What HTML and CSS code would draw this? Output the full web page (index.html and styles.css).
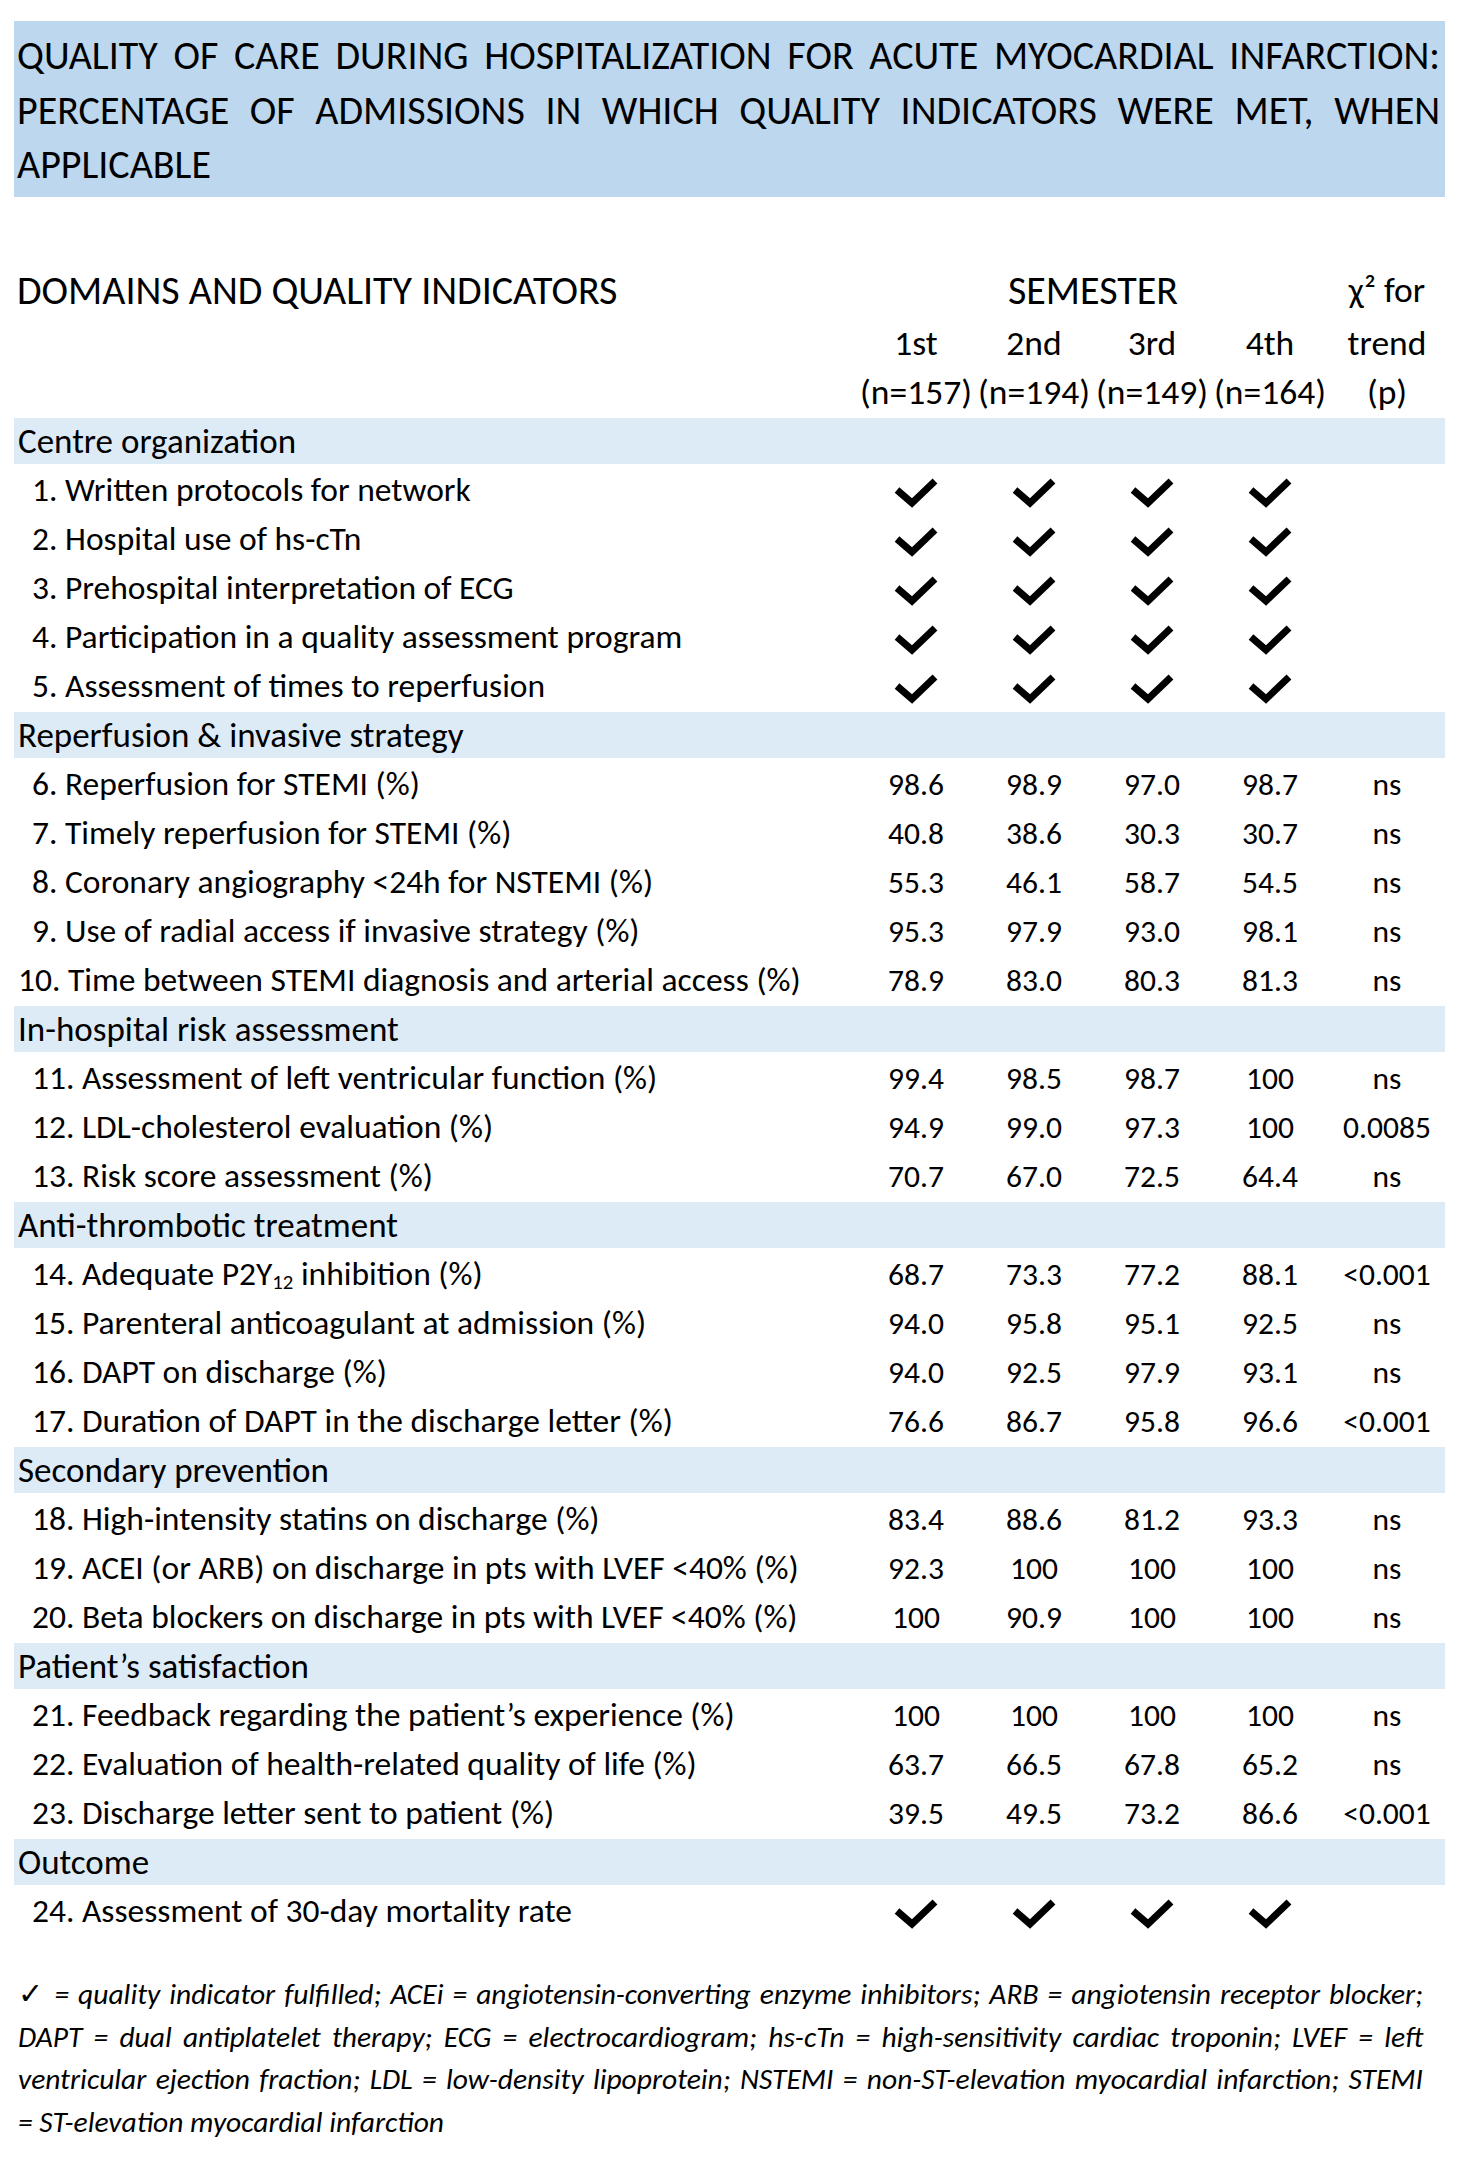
FILE: index.html
```html
<!DOCTYPE html>
<html lang="en">
<head>
<meta charset="utf-8">
<title>Quality of care during hospitalization for acute myocardial infarction</title>
<link rel="stylesheet" href="styles.css">
</head>
<body>
<div class="page">
  <div class="title">
    <span class="jline">QUALITY OF CARE DURING HOSPITALIZATION FOR ACUTE MYOCARDIAL INFARCTION:</span>
    <span class="jline">PERCENTAGE OF ADMISSIONS IN WHICH QUALITY INDICATORS WERE MET, WHEN</span>
    <span class="lline">APPLICABLE</span>
  </div>

  <div class="table">
    <div class="hrow hrow-a">
      <div class="hlabel">DOMAINS AND QUALITY INDICATORS</div>
      <div class="sem">SEMESTER</div>
      <div class="hsub">χ² for</div>
    </div>
    <div class="hrow">
      <div></div>
      <div class="hsub">1st</div><div class="hsub">2nd</div><div class="hsub">3rd</div><div class="hsub">4th</div><div class="hsub">trend</div>
    </div>
    <div class="hrow">
      <div></div>
      <div class="hsub">(n=157)</div><div class="hsub">(n=194)</div><div class="hsub">(n=149)</div><div class="hsub">(n=164)</div><div class="hsub">(p)</div>
    </div>

    <div class="sec">Centre organization</div>
    <div class="row"><div class="lab">1. Written protocols for network</div><div class="c"><svg class="chk" viewBox="0 0 46 36"><polyline points="4,18 19,31 42,9"/></svg></div><div class="c"><svg class="chk" viewBox="0 0 46 36"><polyline points="4,18 19,31 42,9"/></svg></div><div class="c"><svg class="chk" viewBox="0 0 46 36"><polyline points="4,18 19,31 42,9"/></svg></div><div class="c"><svg class="chk" viewBox="0 0 46 36"><polyline points="4,18 19,31 42,9"/></svg></div><div class="c"></div></div>
    <div class="row"><div class="lab">2. Hospital use of hs-cTn</div><div class="c"><svg class="chk" viewBox="0 0 46 36"><polyline points="4,18 19,31 42,9"/></svg></div><div class="c"><svg class="chk" viewBox="0 0 46 36"><polyline points="4,18 19,31 42,9"/></svg></div><div class="c"><svg class="chk" viewBox="0 0 46 36"><polyline points="4,18 19,31 42,9"/></svg></div><div class="c"><svg class="chk" viewBox="0 0 46 36"><polyline points="4,18 19,31 42,9"/></svg></div><div class="c"></div></div>
    <div class="row"><div class="lab">3. Prehospital interpretation of ECG</div><div class="c"><svg class="chk" viewBox="0 0 46 36"><polyline points="4,18 19,31 42,9"/></svg></div><div class="c"><svg class="chk" viewBox="0 0 46 36"><polyline points="4,18 19,31 42,9"/></svg></div><div class="c"><svg class="chk" viewBox="0 0 46 36"><polyline points="4,18 19,31 42,9"/></svg></div><div class="c"><svg class="chk" viewBox="0 0 46 36"><polyline points="4,18 19,31 42,9"/></svg></div><div class="c"></div></div>
    <div class="row"><div class="lab">4. Participation in a quality assessment program</div><div class="c"><svg class="chk" viewBox="0 0 46 36"><polyline points="4,18 19,31 42,9"/></svg></div><div class="c"><svg class="chk" viewBox="0 0 46 36"><polyline points="4,18 19,31 42,9"/></svg></div><div class="c"><svg class="chk" viewBox="0 0 46 36"><polyline points="4,18 19,31 42,9"/></svg></div><div class="c"><svg class="chk" viewBox="0 0 46 36"><polyline points="4,18 19,31 42,9"/></svg></div><div class="c"></div></div>
    <div class="row"><div class="lab">5. Assessment of times to reperfusion</div><div class="c"><svg class="chk" viewBox="0 0 46 36"><polyline points="4,18 19,31 42,9"/></svg></div><div class="c"><svg class="chk" viewBox="0 0 46 36"><polyline points="4,18 19,31 42,9"/></svg></div><div class="c"><svg class="chk" viewBox="0 0 46 36"><polyline points="4,18 19,31 42,9"/></svg></div><div class="c"><svg class="chk" viewBox="0 0 46 36"><polyline points="4,18 19,31 42,9"/></svg></div><div class="c"></div></div>

    <div class="sec">Reperfusion &amp; invasive strategy</div>
    <div class="row"><div class="lab">6. Reperfusion for STEMI (%)</div><div class="c">98.6</div><div class="c">98.9</div><div class="c">97.0</div><div class="c">98.7</div><div class="c">ns</div></div>
    <div class="row"><div class="lab">7. Timely reperfusion for STEMI (%)</div><div class="c">40.8</div><div class="c">38.6</div><div class="c">30.3</div><div class="c">30.7</div><div class="c">ns</div></div>
    <div class="row"><div class="lab">8. Coronary angiography &lt;24h for NSTEMI (%)</div><div class="c">55.3</div><div class="c">46.1</div><div class="c">58.7</div><div class="c">54.5</div><div class="c">ns</div></div>
    <div class="row"><div class="lab">9. Use of radial access if invasive strategy (%)</div><div class="c">95.3</div><div class="c">97.9</div><div class="c">93.0</div><div class="c">98.1</div><div class="c">ns</div></div>
    <div class="row"><div class="lab lab-wide">10. Time between STEMI diagnosis and arterial access (%)</div><div class="c">78.9</div><div class="c">83.0</div><div class="c">80.3</div><div class="c">81.3</div><div class="c">ns</div></div>

    <div class="sec">In-hospital risk assessment</div>
    <div class="row"><div class="lab">11. Assessment of left ventricular function (%)</div><div class="c">99.4</div><div class="c">98.5</div><div class="c">98.7</div><div class="c">100</div><div class="c">ns</div></div>
    <div class="row"><div class="lab">12. LDL-cholesterol evaluation (%)</div><div class="c">94.9</div><div class="c">99.0</div><div class="c">97.3</div><div class="c">100</div><div class="c">0.0085</div></div>
    <div class="row"><div class="lab">13. Risk score assessment (%)</div><div class="c">70.7</div><div class="c">67.0</div><div class="c">72.5</div><div class="c">64.4</div><div class="c">ns</div></div>

    <div class="sec">Anti-thrombotic treatment</div>
    <div class="row"><div class="lab">14. Adequate P2Y<sub class="sub">12</sub> inhibition (%)</div><div class="c">68.7</div><div class="c">73.3</div><div class="c">77.2</div><div class="c">88.1</div><div class="c">&lt;0.001</div></div>
    <div class="row"><div class="lab">15. Parenteral anticoagulant at admission (%)</div><div class="c">94.0</div><div class="c">95.8</div><div class="c">95.1</div><div class="c">92.5</div><div class="c">ns</div></div>
    <div class="row"><div class="lab">16. DAPT on discharge (%)</div><div class="c">94.0</div><div class="c">92.5</div><div class="c">97.9</div><div class="c">93.1</div><div class="c">ns</div></div>
    <div class="row"><div class="lab">17. Duration of DAPT in the discharge letter (%)</div><div class="c">76.6</div><div class="c">86.7</div><div class="c">95.8</div><div class="c">96.6</div><div class="c">&lt;0.001</div></div>

    <div class="sec">Secondary prevention</div>
    <div class="row"><div class="lab">18. High-intensity statins on discharge (%)</div><div class="c">83.4</div><div class="c">88.6</div><div class="c">81.2</div><div class="c">93.3</div><div class="c">ns</div></div>
    <div class="row"><div class="lab">19. ACEI (or ARB) on discharge in pts with LVEF &lt;40% (%)</div><div class="c">92.3</div><div class="c">100</div><div class="c">100</div><div class="c">100</div><div class="c">ns</div></div>
    <div class="row"><div class="lab">20. Beta blockers on discharge in pts with LVEF &lt;40% (%)</div><div class="c">100</div><div class="c">90.9</div><div class="c">100</div><div class="c">100</div><div class="c">ns</div></div>

    <div class="sec">Patient’s satisfaction</div>
    <div class="row"><div class="lab">21. Feedback regarding the patient’s experience (%)</div><div class="c">100</div><div class="c">100</div><div class="c">100</div><div class="c">100</div><div class="c">ns</div></div>
    <div class="row"><div class="lab">22. Evaluation of health-related quality of life (%)</div><div class="c">63.7</div><div class="c">66.5</div><div class="c">67.8</div><div class="c">65.2</div><div class="c">ns</div></div>
    <div class="row"><div class="lab">23. Discharge letter sent to patient (%)</div><div class="c">39.5</div><div class="c">49.5</div><div class="c">73.2</div><div class="c">86.6</div><div class="c">&lt;0.001</div></div>

    <div class="sec">Outcome</div>
    <div class="row"><div class="lab">24. Assessment of 30-day mortality rate</div><div class="c"><svg class="chk" viewBox="0 0 46 36"><polyline points="4,18 19,31 42,9"/></svg></div><div class="c"><svg class="chk" viewBox="0 0 46 36"><polyline points="4,18 19,31 42,9"/></svg></div><div class="c"><svg class="chk" viewBox="0 0 46 36"><polyline points="4,18 19,31 42,9"/></svg></div><div class="c"><svg class="chk" viewBox="0 0 46 36"><polyline points="4,18 19,31 42,9"/></svg></div><div class="c"></div></div>
  </div>

  <div class="foot">
    <span class="jline"><span class="tick">✓</span> = quality indicator fulfilled; ACEi = angiotensin-converting enzyme inhibitors; ARB = angiotensin receptor blocker;</span>
    <span class="jline">DAPT = dual antiplatelet therapy; ECG = electrocardiogram; hs-cTn = high-sensitivity cardiac troponin; LVEF = left</span>
    <span class="jline">ventricular ejection fraction; LDL = low-density lipoprotein; NSTEMI = non-ST-elevation myocardial infarction; STEMI</span>
    <span class="lline">= ST-elevation myocardial infarction</span>
  </div>
</div>
</body>
</html>
```

FILE: styles.css
```css
html, body {
  margin: 0;
  padding: 0;
  background: #ffffff;
}

body {
  font-family: Carlito, Lato, "Open Sans", sans-serif;
  color: #000000;
}

.page {
  width: 1431px;
  padding: 21px 15px 0 14px;
}

.title {
  background: #bdd7ee;
  height: 176px;
  box-sizing: border-box;
  padding: 8px 5px 0 3px;
  font-size: 40px;
  line-height: 54.5px;
  font-weight: 400;
}

.jline {
  display: block;
  white-space: nowrap;
  text-align: justify;
  text-align-last: justify;
}

.lline {
  display: block;
  white-space: nowrap;
  text-align: left;
}

.table {
  margin-top: 65px;
}

.hrow,
.row {
  display: grid;
  grid-template-columns: 843px repeat(4, 118px) 116px;
  align-items: center;
}

.hrow {
  height: 49px;
  font-size: 35.5px;
}

.hrow-a {
  height: 56px;
}

.hlabel {
  font-size: 40px;
  padding-left: 3px;
  white-space: nowrap;
}

.sem {
  grid-column: 2 / span 4;
  text-align: center;
  font-size: 40px;
}

.hsub {
  text-align: center;
  white-space: nowrap;
}

.sec {
  height: 46px;
  margin: 2px 0 1px;
  background: #ddebf7;
  box-sizing: border-box;
  padding-left: 4px;
  display: flex;
  align-items: center;
  font-size: 35px;
  font-weight: 400;
}

.row {
  height: 49px;
  font-size: 31.5px;
  font-weight: 300;
}

.lab {
  padding-left: 18px;
  white-space: nowrap;
  font-size: 33.5px;
}

.lab-wide {
  padding-left: 4px;
}

.c {
  text-align: center;
  white-space: nowrap;
  display: flex;
  justify-content: center;
  align-items: center;
}

.sub {
  font-size: 0.62em;
  vertical-align: -0.2em;
  line-height: 0;
}

.chk {
  width: 46px;
  height: 36px;
  display: block;
}

.chk polyline {
  fill: none;
  stroke: #000000;
  stroke-width: 7;
  stroke-linejoin: miter;
  stroke-linecap: butt;
}

.foot {
  margin-top: 38px;
  padding: 0 22px 0 4px;
  font-size: 29.5px;
  font-style: italic;
  font-weight: 300;
  line-height: 42.7px;
}

.tick {
  font-style: normal;
  font-family: "DejaVu Sans", sans-serif;
}
```
